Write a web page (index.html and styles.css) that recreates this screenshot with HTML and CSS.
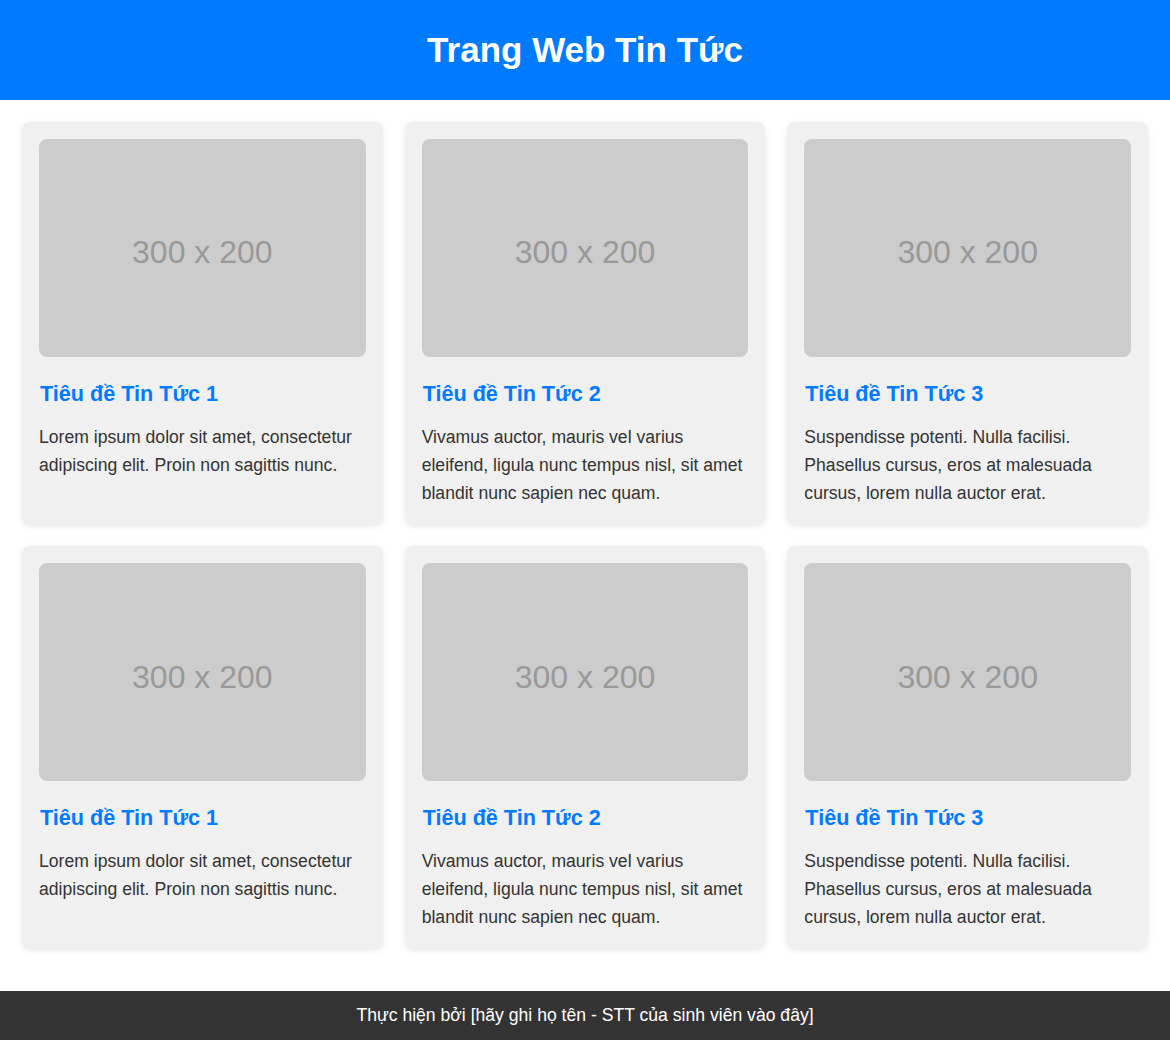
FILE: index.html
```html
<!DOCTYPE html>
<html lang="vi">
<head>
    <meta charset="UTF-8">
    <meta name="viewport" content="width=device-width, initial-scale=1.0">
    <title>Trang Web Tin Tức</title>
    <link rel="stylesheet" href="styles.css">
</head>
<body>
    <header class="header">
        <h1>Trang Web Tin Tức</h1>
    </header>

    <main class="news-grid">
        <article class="card">
            <div class="thumb">300 x 200</div>
            <h3>Tiêu đề Tin Tức 1</h3>
            <p>Lorem ipsum dolor sit amet, consectetur adipiscing elit. Proin non sagittis nunc.</p>
        </article>
        <article class="card">
            <div class="thumb">300 x 200</div>
            <h3>Tiêu đề Tin Tức 2</h3>
            <p>Vivamus auctor, mauris vel varius eleifend, ligula nunc tempus nisl, sit amet blandit nunc sapien nec quam.</p>
        </article>
        <article class="card">
            <div class="thumb">300 x 200</div>
            <h3>Tiêu đề Tin Tức 3</h3>
            <p>Suspendisse potenti. Nulla facilisi. Phasellus cursus, eros at malesuada cursus, lorem nulla auctor erat.</p>
        </article>
        <article class="card">
            <div class="thumb">300 x 200</div>
            <h3>Tiêu đề Tin Tức 1</h3>
            <p>Lorem ipsum dolor sit amet, consectetur adipiscing elit. Proin non sagittis nunc.</p>
        </article>
        <article class="card">
            <div class="thumb">300 x 200</div>
            <h3>Tiêu đề Tin Tức 2</h3>
            <p>Vivamus auctor, mauris vel varius eleifend, ligula nunc tempus nisl, sit amet blandit nunc sapien nec quam.</p>
        </article>
        <article class="card">
            <div class="thumb">300 x 200</div>
            <h3>Tiêu đề Tin Tức 3</h3>
            <p>Suspendisse potenti. Nulla facilisi. Phasellus cursus, eros at malesuada cursus, lorem nulla auctor erat.</p>
        </article>
    </main>

    <footer class="footer">
        Thực hiện bởi [hãy ghi họ tên - STT của sinh viên vào đây]
    </footer>
</body>
</html>
```

FILE: styles.css
```css
* {
    margin: 0;
    padding: 0;
    box-sizing: border-box;
}

body {
    font-family: "Liberation Sans", Arial, sans-serif;
    background: #fff;
    color: #333;
}

.header {
    background: #007bff;
    height: 100px;
    display: flex;
    align-items: center;
    justify-content: center;
}

.header h1 {
    color: white;
    font-size: 35px;
    font-weight: bold;
}

.news-grid {
    display: grid;
    grid-template-columns: repeat(3, 1fr);
    gap: 22px;
    padding: 22px 22px 43px;
}

.card {
    background: #f0f0f0;
    border-radius: 8px;
    box-shadow: 0 2px 6px rgba(0, 0, 0, 0.1);
    padding: 17px;
}

.thumb {
    width: 100%;
    aspect-ratio: 3 / 2;
    background: #ccc;
    border-radius: 8px;
    color: #999;
    font-size: 32px;
    padding-top: 10px;
    display: flex;
    align-items: center;
    justify-content: center;
}

.card h3 {
    color: #007bff;
    font-size: 21.6px;
    font-weight: bold;
    margin: 24px 0 16px 1px;
}

.card p {
    font-size: 17.6px;
    line-height: 1.6;
    color: #333;
}

.footer {
    background: #333;
    color: white;
    text-align: center;
    font-size: 17.6px;
    height: 49px;
    display: flex;
    align-items: center;
    justify-content: center;
}
```
